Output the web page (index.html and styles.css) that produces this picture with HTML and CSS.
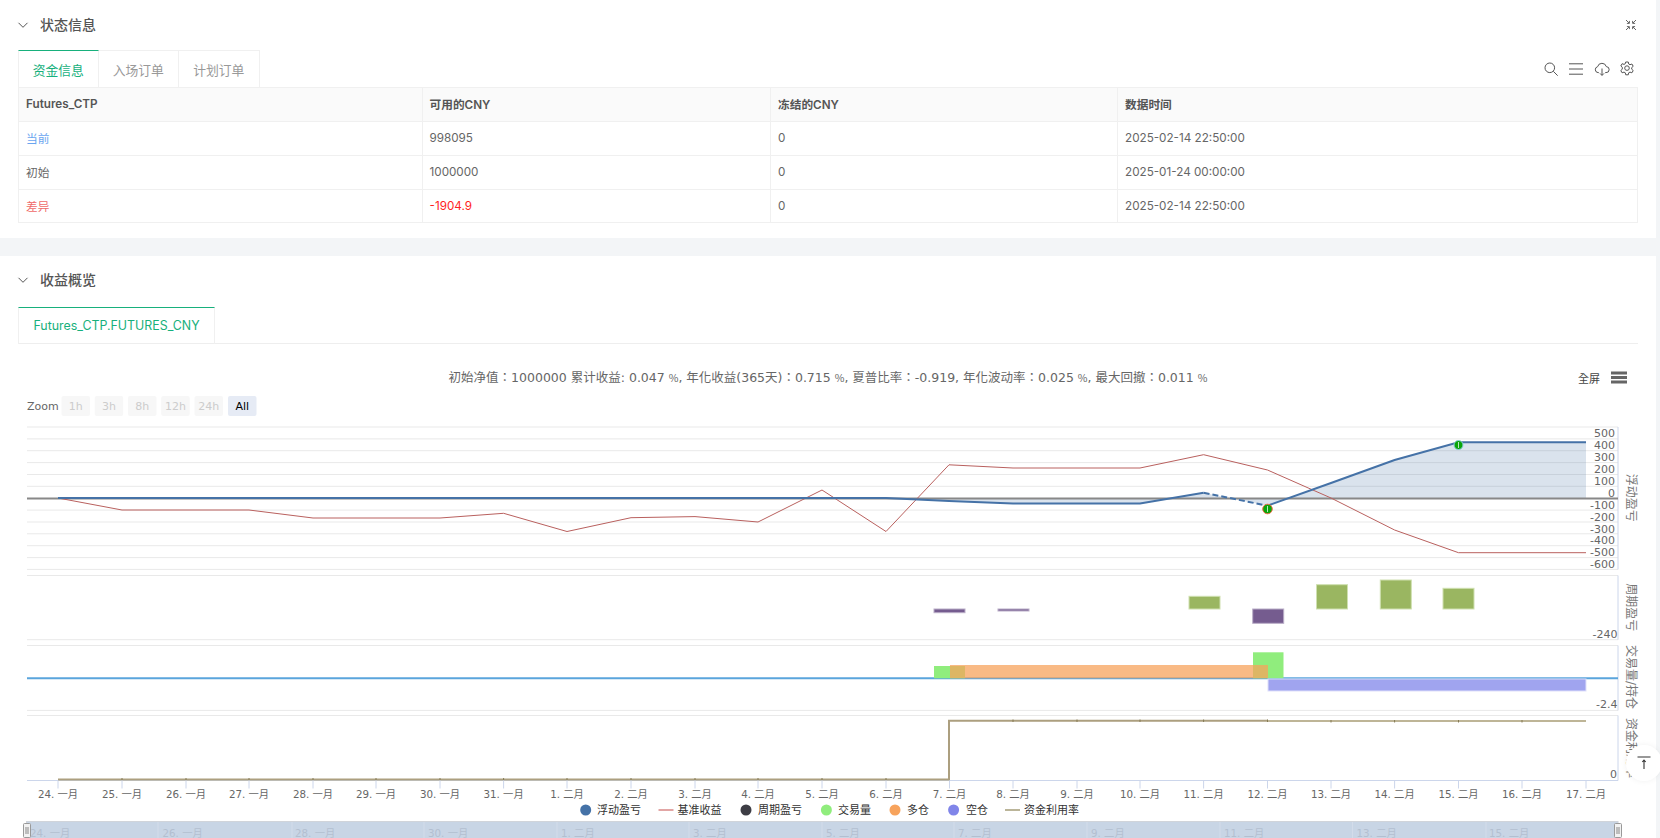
FILE: index.html
```html
<!DOCTYPE html>
<html lang="zh-CN">
<head>
<meta charset="utf-8">
<title>状态信息</title>
<link rel="stylesheet" href="styles.css">
</head>
<body>
<div class="page">
  <section class="card card-status">
    <header class="card-head">
      <svg class="chev" viewBox="0 0 12 12"><path d="M1.5 3.8 6 8.3l4.5-4.5"/></svg>
      <h2>状态信息</h2>
      <svg class="collapse" viewBox="0 0 12 12"><path d="M1 1l3 3M4.4 1.9v2.5H1.9M11 1 8 4M7.6 1.9v2.5h2.5M1 11l3-3M4.4 10.1V7.6H1.9M11 11 8 8M7.6 10.1V7.6h2.5"/></svg>
    </header>
    <div class="tabbar">
      <div class="tabs">
        <div class="tab active">资金信息</div>
        <div class="tab">入场订单</div>
        <div class="tab">计划订单</div>
      </div>
      <div class="tools">
        <svg viewBox="0 0 16 16"><circle cx="6.8" cy="6.8" r="4.8"/><path d="m10.3 10.3 4.4 4.4"/></svg>
        <svg viewBox="0 0 16 16"><path d="M1 2.8h14M1 8h14M1 13.2h14"/></svg>
        <svg viewBox="0 0 16 16"><path d="M4.8 11.6H4A3 3 0 0 1 3.6 5.7 4.5 4.5 0 0 1 12.3 5.6 3 3 0 0 1 12 11.6h-.8M8 7.5v6.8M6 12.4l2 2 2-2"/></svg>
        <svg viewBox="0 0 16 16"><path d="M6.7 1h2.6l.4 2 1.3.7 1.9-.7 1.3 2.3-1.5 1.3v1.6l1.5 1.3-1.3 2.3-1.9-.7-1.3.7-.4 2H6.7l-.4-2-1.3-.7-1.9.7-1.3-2.3 1.500-1.300V6.300L1.800 5l1.300-2.300 1.900.7 1.300-.7z"/><circle cx="8" cy="7.1" r="2.3"/></svg>
      </div>
    </div>
    <table class="assets">
      <colgroup><col class="c1"><col class="c2"><col class="c3"><col></colgroup>
      <thead>
        <tr><th>Futures_CTP</th><th>可用的CNY</th><th>冻结的CNY</th><th>数据时间</th></tr>
      </thead>
      <tbody>
        <tr><td class="blue">当前</td><td>998095</td><td>0</td><td>2025-02-14 22:50:00</td></tr>
        <tr><td>初始</td><td>1000000</td><td>0</td><td>2025-01-24 00:00:00</td></tr>
        <tr><td class="soft-red">差异</td><td class="red">-1904.9</td><td>0</td><td>2025-02-14 22:50:00</td></tr>
      </tbody>
    </table>
  </section>

  <section class="card card-profit">
    <header class="card-head">
      <svg class="chev" viewBox="0 0 12 12"><path d="M1.5 3.8 6 8.3l4.5-4.5"/></svg>
      <h2>收益概览</h2>
    </header>
    <div class="tabbar underline">
      <div class="tabs">
        <div class="tab active wide">Futures_CTP.FUTURES_CNY</div>
      </div>
    </div>
    <svg class="chart" lang="zh-TW" viewBox="0 344 1656 494" width="1656" height="494">
      <text class="chart-title" x="828" y="381.500" text-anchor="middle">初始净值：1000000 累计收益: 0.047 <tspan class="pct">%</tspan>, 年化收益(365天)：0.715 <tspan class="pct">%</tspan>, 夏普比率：-0.919, 年化波动率：0.025 <tspan class="pct">%</tspan>, 最大回撤：0.011 <tspan class="pct">%</tspan></text>
      <text class="fullscreen" x="1578" y="382.500">全屏</text>
      <path class="burger" d="M1611 373h16M1611 377.500h16M1611 382h16"/>

      <text class="zoom-label" x="27" y="410">Zoom</text>
      <g class="rs">
        <rect x="61.500" y="396" width="28.500" height="20" rx="2"/><text x="75.700" y="410">1h</text>
        <rect x="94.700" y="396" width="28.500" height="20" rx="2"/><text x="109" y="410">3h</text>
        <rect x="128" y="396" width="28.500" height="20" rx="2"/><text x="142.200" y="410">8h</text>
        <rect x="161.200" y="396" width="28.500" height="20" rx="2"/><text x="175.500" y="410">12h</text>
        <rect x="194.500" y="396" width="28.500" height="20" rx="2"/><text x="208.700" y="410">24h</text>
      </g>
      <rect class="rs-on" x="228" y="396" width="28.500" height="20" rx="2"/>
      <text class="rs-on-t" x="242.200" y="410">All</text>

      <path class="grid" d="M27 427H1618M27 438.900H1618M27 450.700H1618M27 462.600H1618M27 474.500H1618M27 486.300H1618M27 510.100H1618M27 522H1618M27 533.800H1618M27 545.700H1618M27 557.600H1618M27 569.400H1618M27 575.500H1618M27 639.700H1618M27 645.500H1618M27 710.400H1618M27 715.500H1618"/>
      <path class="frame" d="M1618 427V569.400M1618 575.500V639.700M1618 645.500V710.400M1618 715.500V780.500M27 780.500H1618"/>

      <path class="area" d="M886 498.200 949 501 1013 503.500 1077 503.500 1140 503.700 1203.600 492.700 1267.500 505.700 1331 483 1394.600 460 1458.500 442.300H1586V498.200Z"/>
      <path class="zero" d="M27 498.400H1618"/>
      <path class="red-line" d="M58 498 122 510H249L313 518H440L503.600 513.300 567 531.500 631 517.700 695 516.600 758 522 822 490 886 531.500 949 464.800 1013 468H1140L1203.600 454.700 1267.500 470 1331 498 1394.600 530 1458.500 552.700H1586"/>
      <path class="blue-line" d="M58 498H886L949 501 1013 503.500H1140L1203.600 492.700"/>
      <path class="blue-line dash" d="M1203.600 492.700 1267.500 505.700"/>
      <path class="blue-line" d="M1267.500 505.700 1331 483 1394.600 460 1458.500 442.300H1586"/>
      <circle class="flag-b" cx="1458.500" cy="445" r="4.500"/><path class="flag-s" d="M1458.500 442v6"/>
      <circle class="flag-r" cx="1267.500" cy="509" r="4.800"/><path class="flag-s" d="M1267.500 506v6"/>

      <g class="ylab">
        <text x="1615" y="437">500</text><text x="1615" y="449">400</text><text x="1615" y="461">300</text>
        <text x="1615" y="472.500">200</text><text x="1615" y="484.500">100</text><text x="1615" y="497">0</text>
        <text x="1615" y="508.500">-100</text><text x="1615" y="520.500">-200</text><text x="1615" y="532.500">-300</text>
        <text x="1615" y="544">-400</text><text x="1615" y="555.500">-500</text><text x="1615" y="567.500">-600</text>
        <text x="1617.500" y="638">-240</text><text x="1617.500" y="708">-2.4</text><text x="1617" y="778">0</text>
      </g>
      <g class="ytitle">
        <text transform="translate(1631 497.700) rotate(90)">浮动盈亏</text>
        <text transform="translate(1631 607.300) rotate(90)">周期盈亏</text>
        <text transform="translate(1631 677) rotate(90)">交易量/持仓</text>
        <text transform="translate(1631 748) rotate(90)">资金利用率</text>
      </g>

      <g class="pos">
        <rect x="1189" y="596.300" width="31" height="12.700"/>
        <rect x="1316.500" y="584.700" width="31" height="24.300"/>
        <rect x="1380.300" y="580" width="31" height="29"/>
        <rect x="1443" y="588.300" width="31" height="20.700"/>
      </g>
      <g class="neg">
        <rect x="934" y="609" width="31" height="3.700"/>
        <rect x="998" y="609" width="31" height="2"/>
        <rect x="1252.700" y="609" width="31" height="14.300"/>
      </g>

      <path class="vol-zero" d="M27 678.300H1618"/>
      <rect class="vol" x="934" y="666" width="31" height="12.300"/>
      <rect class="vol" x="1253" y="652.300" width="30.500" height="26"/>
      <rect class="long" x="950" y="665" width="318" height="13.300"/>
      <rect class="short" x="1268" y="679" width="318" height="12"/>

      <path class="use" d="M58 779.500H949V720.700H1268"/>
      <path class="use thin" d="M1268 721H1586"/>
      <path class="use-tick" d="M1013 719.500v2.500M1077 719.500v2.500M1140 719.500v2.500M1203.600 719.500v2.500M1267.500 719.500v2.500M1331 720v2.500M1394.600 720v2.500M1458.500 720v2.500M1522 720v2.500M122 778v2M186 778v2M249 778v2M313 778v2M376 778v2M440 778v2M503.600 778v2M567 778v2M631 778v2M695 778v2M758 778v2M822 778v2M886 778v2"/>

      <path class="ticks" d="M58 780.500v8M122 780.500v8M186 780.500v8M249 780.500v8M313 780.500v8M376 780.500v8M440 780.500v8M503.600 780.500v8M567 780.500v8M631 780.500v8M695 780.500v8M758 780.500v8M822 780.500v8M886 780.500v8M949.500 780.500v8M1013 780.500v8M1077 780.500v8M1140 780.500v8M1203.600 780.500v8M1267.500 780.500v8M1331 780.500v8M1394.600 780.500v8M1458.500 780.500v8M1522 780.500v8M1586 780.500v8"/>
      <g class="xlab">
        <text x="58" y="798">24. 一月</text><text x="122" y="798">25. 一月</text><text x="186" y="798">26. 一月</text>
        <text x="249" y="798">27. 一月</text><text x="313" y="798">28. 一月</text><text x="376" y="798">29. 一月</text>
        <text x="440" y="798">30. 一月</text><text x="503.600" y="798">31. 一月</text><text x="567" y="798">1. 二月</text>
        <text x="631" y="798">2. 二月</text><text x="695" y="798">3. 二月</text><text x="758" y="798">4. 二月</text>
        <text x="822" y="798">5. 二月</text><text x="886" y="798">6. 二月</text><text x="949.500" y="798">7. 二月</text>
        <text x="1013" y="798">8. 二月</text><text x="1077" y="798">9. 二月</text><text x="1140" y="798">10. 二月</text>
        <text x="1203.600" y="798">11. 二月</text><text x="1267.500" y="798">12. 二月</text><text x="1331" y="798">13. 二月</text>
        <text x="1394.600" y="798">14. 二月</text><text x="1458.500" y="798">15. 二月</text><text x="1522" y="798">16. 二月</text>
        <text x="1586" y="798">17. 二月</text>
      </g>

      <g class="legend">
        <circle class="lg1" cx="585.700" cy="810" r="5.500"/><text x="597" y="814">浮动盈亏</text>
        <path class="lg2" d="M658.500 810h15"/><text x="677.500" y="814">基准收益</text>
        <circle class="lg3" cx="746" cy="810" r="5.500"/><text x="758" y="814">周期盈亏</text>
        <circle class="lg4" cx="826.400" cy="810" r="5.500"/><text x="838" y="814">交易量</text>
        <circle class="lg5" cx="895" cy="810" r="5.500"/><text x="907" y="814">多仓</text>
        <circle class="lg6" cx="953.600" cy="810" r="5.500"/><text x="966" y="814">空仓</text>
        <path class="lg7" d="M1005 810h15"/><text x="1024" y="814">资金利用率</text>
      </g>

      <rect class="nav-bg" x="26.500" y="821.500" width="1591.500" height="17"/>
      <path class="nav-grid" d="M158 822v16M292 822v16M424 822v16M557 822v16M689 822v16M822 822v16M954 822v16M1087 822v16M1220 822v16M1352.500 822v16M1486 822v16"/>
      <g class="nav-lab">
        <text x="30" y="837">24. 一月</text><text x="162.500" y="837">26. 一月</text><text x="295" y="837">28. 一月</text>
        <text x="428" y="837">30. 一月</text><text x="561" y="837">1. 二月</text><text x="693" y="837">3. 二月</text>
        <text x="826" y="837">5. 二月</text><text x="958" y="837">7. 二月</text><text x="1091" y="837">9. 二月</text>
        <text x="1224" y="837">11. 二月</text><text x="1356.500" y="837">13. 二月</text><text x="1489" y="837">15. 二月</text>
      </g>
      <g class="handle">
        <rect x="23.500" y="823.500" width="7" height="14" rx="1"/><path d="M26 827v7M28 827v7"/>
        <rect x="1614.500" y="823.500" width="7" height="14" rx="1"/><path d="M1617 827v7M1619 827v7"/>
      </g>
    </svg>
  </section>
</div>
<button class="to-top" type="button" aria-label="top">
  <svg viewBox="0 0 14 14"><path d="M.5 1h13M7 4v9M5.300 6 7 4l1.700 2"/></svg>
</button>
</body>
</html>
```
FILE: styles.css
```css
* { box-sizing: border-box; }
html, body { margin: 0; padding: 0; height: 838px; overflow: hidden; }
body {
  background: #f3f5f7;
  font-family: Inter, "Noto Sans CJK SC", sans-serif;
  font-size: 12px;
  color: #555;
}
.page { width: 1656px; display: flex; flex-direction: column; gap: 18px; }
.card { background: #fff; padding: 0 18px; }
.card-status { height: 238px; }
.card-profit { height: 582px; overflow: hidden; }

.card-head { height: 50px; display: flex; align-items: center; }
.card-profit .card-head { height: 51px; padding-bottom: 3px; }
.chev { width: 12px; height: 12px; margin-right: 11px; margin-left: -1px; fill: none; stroke: #555; stroke-width: 1; }
.card-head h2 { margin: 0; font-size: 14px; font-weight: 500; color: #555; line-height: 22px; }
.collapse { width: 12px; height: 12px; margin-left: auto; margin-right: 1px; fill: none; stroke: #666; stroke-width: 1; }

.tabbar { display: flex; justify-content: space-between; align-items: center; height: 37px; }
.tabbar.underline { border-bottom: 1px solid #eee; }
.tabs { display: flex; height: 37px; }
.tab {
  width: 80.500px; height: 37px;
  border: 1px solid #f0f0f0; border-left-width: 0; border-bottom-width: 0;
  display: flex; align-items: center; justify-content: center;
  color: #999; font-size: 12.800px;
}
.tab:first-child { border-left-width: 1px; }
.tab.active { color: #17b07c; border-top: 1px solid #17b07c; }
.tab.wide { width: 197px; font-size: 12.400px; }

.tools { display: flex; align-items: center; gap: 9.300px; margin-right: 3px; }
.tools svg { width: 16px; height: 16px; fill: none; stroke: #555; stroke-width: 1; }

.assets { width: 1620px; border-collapse: collapse; table-layout: fixed; border: 1px solid #f0f0f0; }
.c1 { width: 403.500px; }
.c2 { width: 348.500px; }
.c3 { width: 347px; }
.assets th, .assets td {
  height: 34px; padding: 0 7px 2px; text-align: left; font-size: 11.700px;
  border: 1px solid #f0f0f0; color: #666;
  font-weight: 400;
}
.assets tbody tr:last-child td { height: 33px; padding-bottom: 1px; }
.assets th { background: #fafafa; font-weight: 600; color: #555; }
.assets td.blue { color: #6aa5f0; }
.assets td.soft-red { color: #ef6a6a; }
.assets td.red { color: #ff1f1f; }

.chart { display: block; margin-left: -18px; font-family: "DejaVu Sans", "Noto Sans CJK TC", sans-serif; }
.chart-title { font-size: 12.500px; fill: #666; }
.pct { font-family: "Noto Sans CJK TC", sans-serif; font-size: 10.500px; }
.fullscreen { font-size: 11px; fill: #444; }
.burger { stroke: #666; stroke-width: 3; fill: none; }
.zoom-label { font-size: 11px; fill: #666; }
.rs rect { fill: #f7f7f7; }
.rs text { font-size: 11px; fill: #ccc; text-anchor: middle; }
.rs-on { fill: #e6ebf5; }
.rs-on-t { font-size: 11px; fill: #000; text-anchor: middle; }

.grid { stroke: #e9e9e9; stroke-width: 1; fill: none; }
.frame { stroke: #ccd6eb; stroke-width: 1; fill: none; }
.area { fill: #4572a7; fill-opacity: .2; }
.zero { stroke: #888; stroke-width: 2; fill: none; }
.red-line { stroke: #b9605e; stroke-width: 1; fill: none; }
.blue-line { stroke: #4572a7; stroke-width: 2; fill: none; }
.blue-line.dash { stroke-dasharray: 6 3; }
.flag-b { fill: #0aa50a; stroke: #8fd0e0; stroke-width: 1; }
.flag-r { fill: #0aa50a; stroke: #f0704a; stroke-width: 1; }
.flag-s { stroke: #b9e6c0; stroke-width: 1; fill: none; }

.ylab text { font-size: 11px; fill: #666; text-anchor: end; }
.ytitle text { font-size: 12px; fill: #777; text-anchor: middle; dominant-baseline: central; }
.pos rect { fill: #9ab661; stroke: #cfe0b0; stroke-width: 1; }
.neg rect { fill: #755c8f; stroke: #baadc7; stroke-width: 1; }
.vol-zero { stroke: #5aa5dc; stroke-width: 2; fill: none; }
.vol { fill: #90ed7d; }
.long { fill: #f7a35c; fill-opacity: .75; }
.short { fill: #8085e9; fill-opacity: .75; stroke: #dfe0fa; stroke-width: 1; }
.use { stroke: #ac9f7f; stroke-width: 2; fill: none; }
.use.thin { stroke-width: 1.400; stroke: #a89c74; }
.use-tick { stroke: #857b55; stroke-width: 1; fill: none; }
.ticks { stroke: #ccd6eb; stroke-width: 1; fill: none; }
.xlab text { font-size: 10.300px; fill: #666; text-anchor: middle; }

.legend text { font-size: 11px; fill: #333; }
.lg1 { fill: #4572a7; }
.lg2 { stroke: #cf6b68; stroke-width: 1.200; }
.lg3 { fill: #3d3d45; }
.lg4 { fill: #90ed7d; }
.lg5 { fill: #f7a35c; }
.lg6 { fill: #8085e9; }
.lg7 { stroke: #8d8455; stroke-width: 1.200; }

.nav-bg { fill: #c8d5e5; stroke: #d0d4da; stroke-width: 1; }
.nav-grid { stroke: #d3dcea; stroke-width: 1; fill: none; }
.nav-lab text { font-size: 10.300px; fill: #b3bfd0; }
.handle rect { fill: #f2f2f2; stroke: #999; stroke-width: 1; }
.handle path { stroke: #888; stroke-width: 1; fill: none; }

.to-top {
  position: fixed; left: 1626px; top: 745px;
  width: 36px; height: 36px; padding: 0;
  border: 0; border-radius: 50%; background: #fff;
  box-shadow: 0 0 6px rgba(0, 0, 0, .06);
  display: flex; align-items: center; justify-content: center;
}
.to-top svg { width: 14px; height: 14px; fill: none; stroke: #333; stroke-width: 1.100; }
```
